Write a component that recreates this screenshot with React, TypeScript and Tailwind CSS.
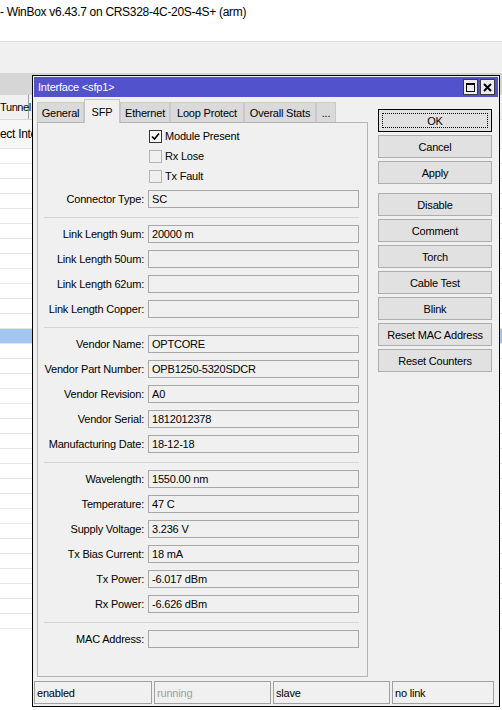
import React from 'react';

const tabs = [
  { label: 'General', w: 'w-[47px]' },
  { label: 'SFP', w: 'w-[36px]', active: true },
  { label: 'Ethernet', w: 'w-[50px]' },
  { label: 'Loop Protect', w: 'w-[74px]' },
  { label: 'Overall Stats', w: 'w-[72px]' },
  { label: '...', w: 'w-[20px]' },
];

type Row = { label: string; value?: string } | 'sep';

const rows: Row[] = [
  { label: 'Connector Type:', value: 'SC' },
  'sep',
  { label: 'Link Length 9um:', value: '20000 m' },
  { label: 'Link Length 50um:' },
  { label: 'Link Length 62um:' },
  { label: 'Link Length Copper:' },
  'sep',
  { label: 'Vendor Name:', value: 'OPTCORE' },
  { label: 'Vendor Part Number:', value: 'OPB1250-5320SDCR' },
  { label: 'Vendor Revision:', value: 'A0' },
  { label: 'Vendor Serial:', value: '1812012378' },
  { label: 'Manufacturing Date:', value: '18-12-18' },
  'sep',
  { label: 'Wavelength:', value: '1550.00 nm' },
  { label: 'Temperature:', value: '47 C' },
  { label: 'Supply Voltage:', value: '3.236 V' },
  { label: 'Tx Bias Current:', value: '18 mA' },
  { label: 'Tx Power:', value: '-6.017 dBm' },
  { label: 'Rx Power:', value: '-6.626 dBm' },
  'sep',
  { label: 'MAC Address:' },
];

const topButtons = ['OK', 'Cancel', 'Apply'];
const actionButtons = ['Disable', 'Comment', 'Torch', 'Cable Test', 'Blink', 'Reset MAC Address', 'Reset Counters'];

function Checkbox({ checked, label }: { checked?: boolean; label: string }) {
  return (
    <div className="h-[20px] flex items-center pl-[105px]">
      <div
        className={`w-[13px] h-[13px] border flex items-center justify-center ${
          checked ? 'border-[#333333] bg-[#f4f4f4]' : 'border-[#b4b4b4] bg-[#f0f0f0]'
        }`}
      >
        {checked && (
          <svg width="9" height="9" viewBox="0 0 9 9">
            <path d="M1 4.5 L3.5 7 L8 1.5" stroke="#000" strokeWidth="1.6" fill="none" />
          </svg>
        )}
      </div>
      <span className="ml-[3px]">{label}</span>
    </div>
  );
}

function Field({ label, value }: { label: string; value?: string }) {
  return (
    <div className="flex items-center h-[18px]">
      <div className="w-[100px] text-right whitespace-nowrap">{label}</div>
      <div className="ml-[4px] w-[211px] h-[18px] border border-[#a8a8a8] bg-[#f0f0f0] px-[3px] flex items-center whitespace-nowrap">
        {value}
      </div>
    </div>
  );
}

function WinButton({ label, primary, extra }: { label: string; primary?: boolean; extra?: string }) {
  return (
    <div
      className={`relative h-[23px] w-[114px] flex items-center justify-center bg-[#e1e1e1] border ${
        primary ? 'border-black' : 'border-[#adadad]'
      } ${extra ?? ''}`}
    >
      {primary && <div className="absolute inset-[3px] border border-dotted border-black" />}
      <span className="relative">{label}</span>
    </div>
  );
}

function Background() {
  const list = Array.from({ length: 32 }, (_, i) => i);
  return (
    <div className="flex flex-col h-full">
      <div className="h-[41px] bg-white pt-[6px] text-[12px] leading-[12px] tracking-[-0.3px] whitespace-nowrap">
        - WinBox v6.43.7 on CRS328-4C-20S-4S+ (arm)
      </div>
      <div className="h-px bg-[#dcdcdc]" />
      <div className="h-[31px] bg-[#f0f0f0]" />
      <div className="h-[22px] bg-[#d6d6d6]" />
      <div className="h-[25px] bg-[#f0f0f0] border-b border-[#d9d9d9] flex">
        <div className="w-[29px] border-r border-[#a0a0a0] flex items-center text-[11px] tracking-[-0.4px] whitespace-nowrap">
          Tunnel
        </div>
      </div>
      <div className="h-[29px] bg-[#f7f7f7] border-b border-[#e2e2e2] flex items-center text-[12px] tracking-[-0.3px] whitespace-nowrap">
        ect Inte
      </div>
      {list.map((i) => (
        <div
          key={i}
          className={`h-[15px] border-b border-[#e6e6e6] ${i === 12 ? 'bg-[#a3c6f0]' : 'bg-white'}`}
        />
      ))}
    </div>
  );
}

function TitleBar() {
  return (
    <div className="h-[20px] bg-[#5252cc] flex items-center pl-[4px] pr-[3px] text-white">
      <span className="flex-1">Interface &lt;sfp1&gt;</span>
      <div className="flex gap-[2px]">
        <div className="w-[15px] h-[16px] bg-[#ececec] border border-[#3a3a3a] flex items-center justify-center">
          <svg width="9" height="9" viewBox="0 0 9 9">
            <rect x="0.5" y="0.5" width="8" height="8" fill="none" stroke="#000" />
            <rect x="0" y="0" width="9" height="2" fill="#000" />
          </svg>
        </div>
        <div className="w-[15px] h-[16px] bg-[#ececec] border border-[#3a3a3a] flex items-center justify-center">
          <svg width="9" height="9" viewBox="0 0 9 9">
            <path d="M1 1 L8 8 M8 1 L1 8" stroke="#000" strokeWidth="2" />
          </svg>
        </div>
      </div>
    </div>
  );
}

function Tabs() {
  return (
    <div className="h-[23px] flex items-end">
      {tabs.map((t) =>
        t.active ? (
          <div
            key={t.label}
            className={`${t.w} relative z-10 h-[24px] -mb-px bg-[#f0f0f0] border-x border-t border-[#c4c4c4] flex justify-center pt-[5px]`}
          >
            {t.label}
          </div>
        ) : (
          <div
            key={t.label}
            className={`${t.w} h-[20px] bg-[#dadada] border-x border-t border-[#c9c9c9] flex justify-center pt-[3px] whitespace-nowrap`}
          >
            {t.label}
          </div>
        )
      )}
    </div>
  );
}

function Panel() {
  return (
    <div className="h-[555px] border border-[#b4b4b4] bg-[#f0f0f0] pl-[6px] pt-[3px] flex flex-col">
      <Checkbox checked label="Module Present" />
      <Checkbox label="Rx Lose" />
      <Checkbox label="Tx Fault" />
      <div className="mt-[4px] flex flex-col gap-[7px]">
        {rows.map((r, i) =>
          r === 'sep' ? (
            <div key={i} className="mt-[2px] h-px w-[315px] bg-[#d6d6d6]" />
          ) : (
            <Field key={i} label={r.label} value={r.value} />
          )
        )}
      </div>
    </div>
  );
}

function StatusBar() {
  const cells = [
    { text: 'enabled', w: 'w-[118px]', c: 'text-black' },
    { text: 'running', w: 'w-[117px]', c: 'text-[#a0a0a0]' },
    { text: 'slave', w: 'w-[117px]', c: 'text-black' },
    { text: 'no link', w: 'w-[102px]', c: 'text-black' },
  ];
  return (
    <div className="mt-[4px] h-[23px] flex gap-[2px]">
      {cells.map((c) => (
        <div key={c.text} className={`${c.w} ${c.c} h-full border border-[#a0a0a0] flex items-center pl-[2px]`}>
          {c.text}
        </div>
      ))}
    </div>
  );
}

export default function App() {
  return (
    <div className="relative w-[502px] h-[710px] overflow-hidden bg-white text-black [font-family:'Liberation_Sans',Arial,sans-serif]">
      <Background />
      <div className="absolute left-[32px] top-[75px] w-[468px] h-[632px] border border-black bg-[#f0f0f0] p-px flex flex-col text-[11px] leading-[14px] tracking-[-0.2px]">
        <TitleBar />
        <div className="flex mt-[2px] pl-[3px]">
          <div className="flex flex-col w-[331px]">
            <Tabs />
            <Panel />
          </div>
          <div className="ml-[10px] mt-[10px] flex flex-col gap-[3px]">
            {topButtons.map((b) => (
              <WinButton key={b} label={b} primary={b === 'OK'} />
            ))}
            {actionButtons.map((b, i) => (
              <WinButton key={b} label={b} extra={i === 0 ? 'mt-[6px]' : ''} />
            ))}
          </div>
        </div>
        <StatusBar />
      </div>
    </div>
  );
}
